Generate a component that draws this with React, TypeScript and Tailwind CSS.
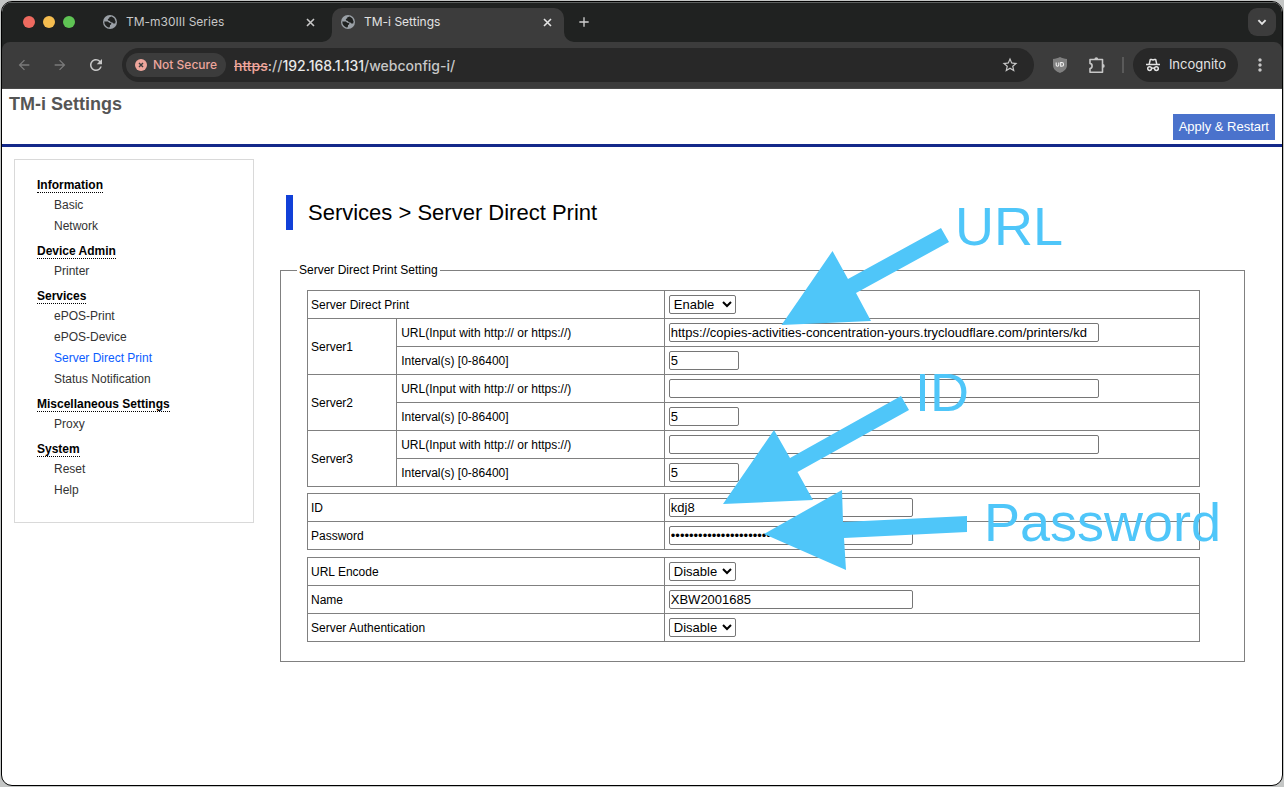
import type { ReactNode } from "react";
import { MdArrowBack, MdArrowForward, MdRefresh, MdStarOutline, MdMoreVert, MdAdd } from "react-icons/md";

type MenuGroup = { title: string; items: string[] };

const MENU: MenuGroup[] = [
  { title: "Information", items: ["Basic", "Network"] },
  { title: "Device Admin", items: ["Printer"] },
  { title: "Services", items: ["ePOS-Print", "ePOS-Device", "Server Direct Print", "Status Notification"] },
  { title: "Miscellaneous Settings", items: ["Proxy"] },
  { title: "System", items: ["Reset", "Help"] },
];

const ACTIVE = "Server Direct Print";

const SERVERS = [
  { name: "Server1", url: "https://copies-activities-concentration-yours.trycloudflare.com/printers/kd", interval: "5" },
  { name: "Server2", url: "", interval: "5" },
  { name: "Server3", url: "", interval: "5" },
];

const cell = "h-7 border border-[#808080] py-0 text-left font-normal";
const field = "block h-[19px] rounded-[2px] border border-[#767676] bg-white text-[13px] leading-4 text-black";

function Globe() {
  return (
    <svg width="14" height="14" viewBox="0 0 14 14" className="shrink-0">
      <circle cx="7" cy="7" r="7" fill="#9aa0a6" />
      <path d="M6.400 2.200 8.600 1.400l2.700 1.900 1.300 3.200-.4 1.900-1.800.2-1-1.200-1.700-.2-.8-1.300-1.700-.3-.5-1.700 1.400-.5z" fill="#202221" />
      <path d="M1.300 6.500h3.500l1.500 1.200 1.700.2.400 1.200-1.400 1.200-.2 1.900-1.500.2L3 11 1.600 9z" fill="#202221" />
    </svg>
  );
}

function Close() {
  return (
    <svg width="13" height="13" viewBox="0 0 13 13" stroke="currentColor" strokeWidth="1.600">
      <path d="m3 3 7 7M10 3l-7 7" />
    </svg>
  );
}

function Chevron() {
  return (
    <svg width="14" height="14" viewBox="0 0 14 14" fill="none" stroke="currentColor" strokeWidth="1.900">
      <path d="m3.400 5.200 3.600 3.600 3.600-3.600" />
    </svg>
  );
}

function Incognito() {
  return (
    <svg width="16" height="16" viewBox="0 0 16 16" fill="none" stroke="#e3e3e3" strokeWidth="1.500">
      <path d="M1 7.600h14" />
      <path d="M4.200 7.300 5.300 2.500h1.200l1.500.5 1.500-.5h1.200l1.100 4.800" strokeLinejoin="round" />
      <circle cx="4.600" cy="11.600" r="1.900" />
      <circle cx="11.400" cy="11.600" r="1.900" />
      <path d="M6.500 11.400c.9-.6 2.100-.6 3 0" />
    </svg>
  );
}

function Puzzle() {
  return (
    <svg width="18" height="18" viewBox="0 0 18 18" fill="none" stroke="#c7c7c7" strokeWidth="1.600" strokeLinejoin="round">
      <path d="M2 3.500h12.500v12.700H2v-3.700a2.600 2.600 0 0 0 0-5.100z" />
      <path d="M6.400 3.200a1.900 1.900 0 0 1 3.800 0zM14.800 8a1.900 1.900 0 0 1 0 3.800z" fill="#c7c7c7" stroke="none" />
    </svg>
  );
}

function Shield() {
  return (
    <svg width="16" height="16" viewBox="0 0 16 16">
      <path d="M8 0c2 1.200 4.300 1.800 7 1.900v6.200c0 4-3 6.500-7 7.900-4-1.400-7-3.900-7-7.900V1.900C3.700 1.800 6 1.200 8 0z" fill="#808080" />
      <path d="M4.200 5.500v2.600c0 1.600 2.600 1.600 2.600 0V5.500M8.700 5.500v3.800h1a1.900 1.900 0 0 0 0-3.800z" fill="none" stroke="#f1f1f1" strokeWidth="1.100" />
    </svg>
  );
}

function TabStrip() {
  return (
    <div className="flex h-10 items-end border-t border-[#5c5f5e] bg-[#202221]">
      <div className="flex h-[34px] items-center gap-2 pb-1.5 pl-[21px] pr-7">
        <span className="size-3 rounded-full bg-[#ee6a5f]" />
        <span className="size-3 rounded-full bg-[#f5bd4f]" />
        <span className="size-3 rounded-full bg-[#5fc454]" />
      </div>
      <div className="flex h-[34px] w-[229px] items-center pb-1.5 text-[#c7c7c7]">
        <Globe />
        <span className="ml-[9px] flex-1 text-[12px]">TM-m30III Series</span>
        <button aria-label="Close tab" className="mr-[15px]"><Close /></button>
      </div>
      <div className="relative flex h-[34px] w-[232px] items-center rounded-t-[10px] bg-[#3c3c3c] pb-1.5 pl-[9px] text-[#e3e3e3]">
        <svg className="absolute -left-2.5 bottom-0" width="10" height="10" viewBox="0 0 10 10"><path d="M10 0v10H0A10 10 0 0 0 10 0z" fill="#3c3c3c" /></svg>
        <svg className="absolute -right-2.5 bottom-0" width="10" height="10" viewBox="0 0 10 10"><path d="M0 0v10h10A10 10 0 0 1 0 0z" fill="#3c3c3c" /></svg>
        <Globe />
        <span className="ml-[9px] flex-1 text-[12px]">TM-i Settings</span>
        <button aria-label="Close tab" className="mr-2.5"><Close /></button>
      </div>
      <div className="flex h-[34px] flex-1 items-center justify-between pb-1.5 pl-3 pr-1.5 text-[#d0d0d0]">
        <button aria-label="New tab"><MdAdd size={16} /></button>
        <button aria-label="Search tabs" className="flex size-7 items-center justify-center rounded-[9px] bg-[#3c3c3c] text-[#e3e3e3]"><Chevron /></button>
      </div>
    </div>
  );
}

function Toolbar() {
  return (
    <div className="bg-[#202221]">
      <div className="flex h-[47px] items-center rounded-t-lg border-b border-[#4a4a4a] bg-[#3c3c3c] pl-3.5 pr-3 text-[#c7c7c7]">
        <button aria-label="Back" className="mr-5 text-[#7a7a7a]"><MdArrowBack size={16} /></button>
        <button aria-label="Forward" className="mr-[19px] text-[#7a7a7a]"><MdArrowForward size={16} /></button>
        <button aria-label="Reload" className="mr-[17px]"><MdRefresh size={18} /></button>
        <div className="flex h-[34px] flex-1 items-center rounded-full bg-[#282828] pl-1 pr-[15px]">
          <button className="flex h-6 items-center gap-1.5 rounded-full bg-[#3c3c3c] px-[9px] text-[12px] font-medium text-[#eea69c]">
            <svg width="12" height="12" viewBox="0 0 12 12">
              <circle cx="6" cy="6" r="6" fill="#eea69c" />
              <path d="m4 4 4 4M8 4 4 8" stroke="#3c3c3c" strokeWidth="1.400" />
            </svg>
            Not Secure
          </button>
          <span className="ml-2 flex-1 text-[14px] font-medium text-[#c7c7c7]">
            <span className="text-[#eea69c] line-through">https</span>://<span className="text-[#e8e8e8]">192.168.1.131</span>/webconfig-i/
          </span>
          <button aria-label="Bookmark this tab"><MdStarOutline size={18} /></button>
        </div>
        <span className="ml-[18px]"><Shield /></span>
        <button aria-label="Extensions" className="ml-5"><Puzzle /></button>
        <span className="ml-4 h-4 w-0.5 bg-[#5a5a5a]" />
        <button className="ml-[9px] flex h-[34px] items-center gap-2 rounded-full bg-[#282828] px-3 text-[13px] text-[#e3e3e3]">
          <Incognito />
          Incognito
        </button>
        <button aria-label="Menu" className="ml-3"><MdMoreVert size={20} /></button>
      </div>
    </div>
  );
}

function Sidebar() {
  return (
    <nav className="ml-3 mt-3 flex w-60 shrink-0 flex-col gap-[7px] self-start border border-[#d9d9d9] pb-[21px] pl-[22px] pt-[18px] text-[12px]">
      {MENU.map((g) => (
        <div key={g.title}>
          <h2 className="mb-0.5 w-fit border-b border-dotted border-black pt-px font-bold leading-[13px]">{g.title}</h2>
          <ul className="pl-[17px]">
            {g.items.map((item) => (
              <li key={item} className="leading-[21px]">
                <a href="#" className={item === ACTIVE ? "text-[#0b5cff]" : "text-[#333333]"}>{item}</a>
              </li>
            ))}
          </ul>
        </div>
      ))}
    </nav>
  );
}

function SettingsTable({ className, children }: { className?: string; children: ReactNode }) {
  return (
    <table className={`w-full table-fixed border-collapse ${className ?? ""}`}>
      <colgroup>
        <col className="w-[10%]" />
        <col className="w-[30%]" />
        <col className="w-[60%]" />
      </colgroup>
      <tbody>{children}</tbody>
    </table>
  );
}

function Row({ id, label, children }: { id: string; label: string; children: ReactNode }) {
  return (
    <tr>
      <th colSpan={2} className={`${cell} px-[3px]`}><label htmlFor={id}>{label}</label></th>
      <td className={`${cell} px-1`}>{children}</td>
    </tr>
  );
}

function Toggle({ id, value }: { id: string; value: string }) {
  return (
    <select id={id} defaultValue={value} className={`${field} w-[67px]`}>
      <option>Enable</option>
      <option>Disable</option>
    </select>
  );
}

function Annotations() {
  return (
    <div className="pointer-events-none absolute left-0 top-0 text-[54px] leading-none text-[#4fc6f9]">
      <svg width="740" height="440" viewBox="0 0 740 440" fill="#4fc6f9" className="max-w-none">
        <polygon points="527.5,178 578.5,104 594,132 687,81 695,95 602,146 617,174" />
        <polygon points="469,357 520,283 536,311 647,249 655,263 543.5,325 559,353" />
        <polygon points="510,387 588,343 589,375 713,369 713,385 590,391 592,423" />
      </svg>
      <span className="absolute left-[701px] top-[52px]">URL</span>
      <span className="absolute left-[661px] top-[218px]">ID</span>
      <span className="absolute left-[730px] top-[348px]">Password</span>
    </div>
  );
}

export default function App() {
  return (
    <div className="flex min-h-screen bg-[#c4c6c5] p-px">
      <div className="flex flex-1 flex-col overflow-hidden rounded-[11px] border border-black bg-white font-['Inter',sans-serif]">
        <TabStrip />
        <Toolbar />

        <div className="flex flex-1 flex-col font-['Liberation_Sans',Arial,sans-serif] text-black">
          <header className="flex h-[58px] justify-between border-b-[3px] border-[#14298a] pl-[7px] pr-[7px]">
            <h1 className="pt-[3px] text-[18px] font-bold leading-6 text-[#555555]">TM-i Settings</h1>
            <button className="mb-1 h-[26px] self-end bg-[#4a72cc] px-1.5 text-[13px] text-white">Apply &amp; Restart</button>
          </header>

          <div className="flex">
            <Sidebar />
            <main className="relative flex-1 pb-8 pl-[26px] pr-[37px] pt-12">
              <h2 className="ml-1.5 border-l-[7px] border-[#1140d8] pl-[15px] text-[22px] leading-[35px]">Services &gt; Server Direct Print</h2>

              <fieldset className="mt-8 border border-[#808080] px-4 pb-[19px] pt-3 text-[12px]">
                <legend className="px-0.5 leading-4">Server Direct Print Setting</legend>
                <div className="pl-2.5 pr-7">
                  <SettingsTable>
                    <Row id="sdp" label="Server Direct Print"><Toggle id="sdp" value="Enable" /></Row>
                    {SERVERS.map((s) => [
                      <tr key={`${s.name}-url`}>
                        <th rowSpan={2} className={`${cell} px-[3px]`}>{s.name}</th>
                        <th className={`${cell} px-1`}><label htmlFor={`${s.name}-url`}>URL(Input with http:// or https://)</label></th>
                        <td className={`${cell} px-1`}><input id={`${s.name}-url`} type="text" defaultValue={s.url} className={`${field} w-[430px] px-px`} /></td>
                      </tr>,
                      <tr key={`${s.name}-interval`}>
                        <th className={`${cell} px-1`}><label htmlFor={`${s.name}-interval`}>Interval(s) [0-86400]</label></th>
                        <td className={`${cell} px-1`}><input id={`${s.name}-interval`} type="text" defaultValue={s.interval} className={`${field} w-[70px] px-px`} /></td>
                      </tr>,
                    ])}
                  </SettingsTable>

                  <SettingsTable className="mt-1.5">
                    <Row id="auth-id" label="ID"><input id="auth-id" type="text" defaultValue="kdj8" className={`${field} w-[244px] px-px`} /></Row>
                    <Row id="auth-pw" label="Password"><input id="auth-pw" type="password" defaultValue="passwordpasswordpassword" className={`${field} w-[244px] px-px`} /></Row>
                  </SettingsTable>

                  <SettingsTable className="mt-[7px]">
                    <Row id="url-encode" label="URL Encode"><Toggle id="url-encode" value="Disable" /></Row>
                    <Row id="name" label="Name"><input id="name" type="text" defaultValue="XBW2001685" className={`${field} w-[244px] px-px`} /></Row>
                    <Row id="server-auth" label="Server Authentication"><Toggle id="server-auth" value="Disable" /></Row>
                  </SettingsTable>
                </div>
              </fieldset>

              <Annotations />
            </main>
          </div>
        </div>
      </div>
    </div>
  );
}
